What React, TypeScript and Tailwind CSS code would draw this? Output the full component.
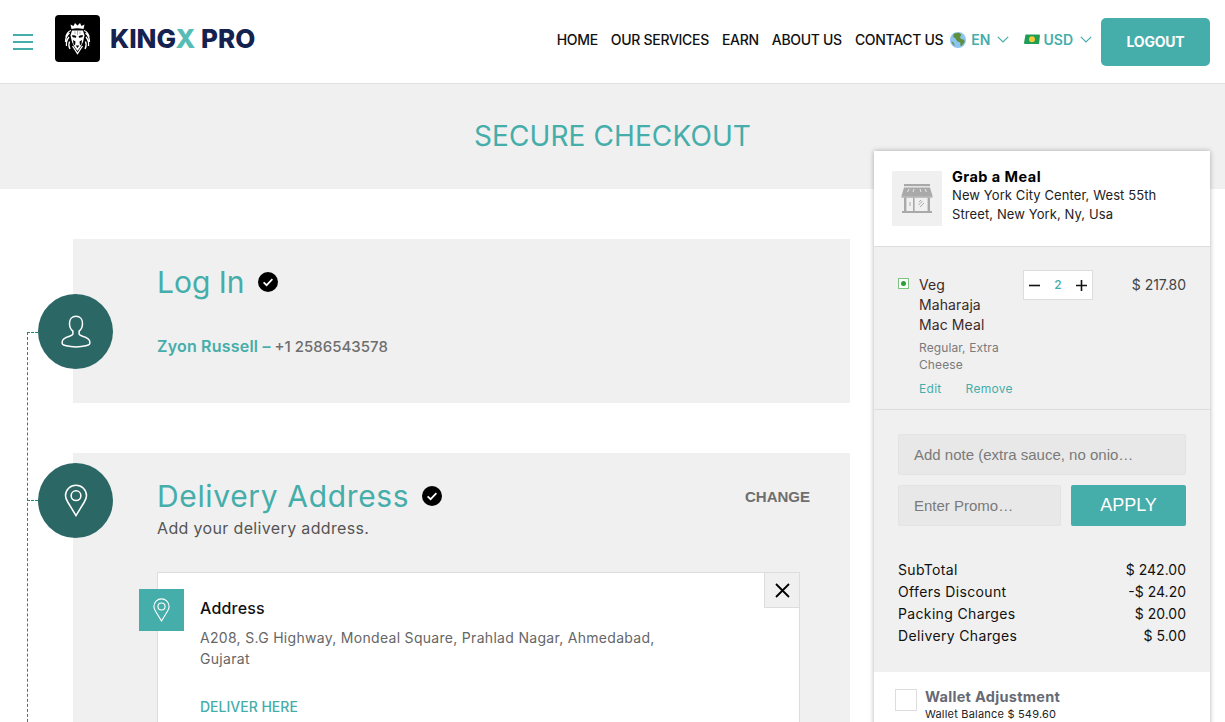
import React from "react";

const Chevron = () => (
  <svg width="12" height="7" viewBox="0 0 12 7" fill="none" stroke="#45adaa" strokeWidth="1.2"><path d="M.8.8 6 6l5.2-5.2" /></svg>
);

const Check = () => (
  <svg width="20" height="20" viewBox="0 0 20 20"><circle cx="10" cy="10" r="10" fill="#000" /><path d="M5.6 10.4 8.6 13.2 14.4 7.2" fill="none" stroke="#fff" strokeWidth="1.7" /></svg>
);

const Pin = ({ w, h }: { w: number; h: number }) => (
  <svg width={w} height={h} viewBox="0 0 24 34" fill="none" stroke="#fff" strokeWidth="1.6">
    <path d="M12 32.5 3.6 18.8C2.3 16.7 1.2 14.8 1.2 12.2 1.2 6 6 1.2 12 1.2S22.8 6 22.8 12.2c0 2.6-1.1 4.5-2.4 6.6L12 32.5Z" />
    <circle cx="12" cy="12" r="5" />
  </svg>
);

const User = () => (
  <svg width="30" height="33" viewBox="0 0 30 33" fill="none" stroke="#fff" strokeWidth="1.5">
    <path d="M15 1.2c-3.9 0-6.5 3-6.5 7 0 3.5 1.4 6.4 3.4 8v2.6c0 1-1.1 1.7-3.4 2.4-4 1.2-7.3 2.6-7.3 5.6v1.7c0 1.6 6.2 3.4 13.8 3.4s13.8-1.8 13.8-3.4v-1.7c0-3-3.3-4.4-7.3-5.6-2.3-.7-3.4-1.4-3.4-2.4v-2.6c2-1.6 3.4-4.5 3.4-8 0-4-2.6-7-6.5-7Z" />
  </svg>
);

const Lion = () => (
  <svg width="29" height="34" viewBox="0 0 29 34">
    <path fill="#fff" d="M8.500 7 7.500 2.500 10.500 4 12 1l2.500 2.500L17 1l1.500 3 3-1.500-1 4.500c-3.800-1-8.200-1-12 0Z" />
    <g fill="none" stroke="#fff" strokeWidth="1.3">
      <path d="M8 8.500C5 9.500 3.500 12 3 15M6.500 11c-2.500 2-4 5-4 9M6 15c-2 2.500-3 5.500-2.500 9M6.500 19.500C5.500 22 5.500 24.500 7 27" />
      <path d="M21 8.500c3 1 4.500 3.500 5 6.500M22.500 11c2.500 2 4 5 4 9M23 15c2 2.500 3 5.500 2.500 9M22.500 19.500c1 2.500 1 5-.5 7.500" />
      <path d="M9.500 24 14.500 31.500 19.500 24" />
    </g>
    <path fill="#fff" d="M9 8.500h11l1.500 5-1.500 6.500-2.500 5-3 4-3-4-2.500-5-1.500-6.500Z" />
    <path fill="#000" d="M8.800 13.500c1.800-.6 3.600-.1 4.600 1l-.6 1.200-3-.4ZM20.200 13.500c-1.800-.6-3.600-.1-4.600 1l.6 1.200 3-.4Z" />
    <path fill="#000" d="M10 18l2.500 1.500-.5 4-1.500-1.500ZM19 18l-2.500 1.500.5 4 1.500-1.500Z" />
    <path fill="#000" d="M12.700 23.500h3.600l-1.800 2.500Z" />
    <path stroke="#888" strokeWidth=".7" d="M14.500 9v4M12 9.500v2.500M17 9.500v2.500" />
  </svg>
);

const Store = () => (
  <svg width="32" height="32" viewBox="0 0 32 32" fill="none">
    <rect x="3" y="1" width="26" height="2.2" fill="#a9a9a9" />
    <path d="M3 4.500h26l2.500 8.500h-31Z" fill="#a9a9a9" />
    <path d="M8 6 6.500 9M13 6l-1 3M19 6l1 3M24 6l1.500 3" stroke="#e8e8e8" strokeWidth="1" />
    <path d="M.5 13h31v1.800H.5Z" fill="#b5b5b5" />
    <rect x="3" y="14.500" width="2.400" height="13.500" fill="#a9a9a9" />
    <rect x="26.600" y="14.500" width="2.400" height="13.500" fill="#a9a9a9" />
    <rect x="12" y="14.500" width="1.600" height="13.500" fill="#a9a9a9" />
    <path d="M9 19v4M17.500 22l4-4M19 24l4-4M18 19l2-2" stroke="#a9a9a9" strokeWidth="1" />
    <rect x="1" y="28" width="30" height="2" fill="#a9a9a9" />
  </svg>
);

const Globe = () => (
  <svg width="16" height="16" viewBox="0 0 16 16">
    <circle cx="8" cy="8" r="8" fill="#8cc4f2" />
    <path fill="#5f8f3c" d="M4 1.500 9 .7l2.500 2-1.500 2.300 1 2 2.600.6 1.300 2-2.800 3.900-1.500.6-.4-3.600-3-1.200-2-3L3 4.500ZM1 9l2.500 1.500L5 14l-2-1.500Z" />
  </svg>
);

const Cash = () => (
  <svg width="16" height="11" viewBox="0 0 16 11">
    <path fill="#1f9d55" d="M1.500.5h14l.5 1-1 8.500H.5L0 9Z" />
    <circle cx="8" cy="5.300" r="3" fill="#f5c93a" />
  </svg>
);

const Row = ({ l, r }: { l: string; r: string }) => (
  <div className="flex h-[22px] items-center justify-between text-[14px] text-[#111]">
    <span className="tracking-[0.35px]">{l}</span>
    <span>{r}</span>
  </div>
);

const Nav = ({ children }: { children: React.ReactNode }) => (
  <span className="text-[14px] font-medium tracking-[-0.3px] text-[#111]">{children}</span>
);

export default function App() {
  return (
    <div className="h-[722px] overflow-hidden bg-white font-['Inter',sans-serif]">
      <header className="flex h-[84px] items-center justify-between border-b border-[#e0e0e0] pl-[13px] pr-[15px]">
        <div className="flex items-center">
          <div className="flex w-[20px] flex-col gap-[5px]">
            <div className="h-[2px] bg-[#45adaa]" />
            <div className="h-[2px] bg-[#45adaa]" />
            <div className="h-[2px] bg-[#45adaa]" />
          </div>
          <div className="mb-[6px] ml-[22px] flex h-[47px] w-[45px] items-center justify-center rounded-[4px] bg-black"><Lion /></div>
          <div className="mb-[6px] ml-[10px] text-[26px] font-extrabold text-[#15214f]">KING<span className="text-[#55bdb6]">X</span> PRO</div>
        </div>
        <div className="flex items-center">
          <div className="mb-[4px] flex items-center">
            <div className="flex gap-[13px]">
              <Nav>HOME</Nav><Nav>OUR SERVICES</Nav><Nav>EARN</Nav><Nav>ABOUT US</Nav><Nav>CONTACT US</Nav>
            </div>
            <div className="ml-[7px] flex items-center gap-[5px]"><Globe /><span className="text-[14px] font-semibold text-[#45adaa]">EN</span></div>
            <div className="ml-[7px]"><Chevron /></div>
            <div className="ml-[15px] flex items-center gap-[3px]"><Cash /><span className="text-[14px] font-semibold text-[#45adaa]">USD</span></div>
            <div className="ml-[7px]"><Chevron /></div>
          </div>
          <button className="ml-[9px] h-[48px] w-[109px] rounded-[5px] bg-[#45adaa] text-[14px] font-bold tracking-[-0.2px] text-white">LOGOUT</button>
        </div>
      </header>

      <div className="flex h-[105px] items-start justify-center bg-[#f0f0f0] pt-[33px]">
        <h1 className="text-[28px] leading-[38px] font-normal tracking-[0.1px] text-[#45adaa]">SECURE CHECKOUT</h1>
      </div>

      <div className="flex items-start">
        <div className="relative ml-[73px] mt-[50px] flex w-[777px] flex-col gap-[50px]">
          <div className="absolute left-[-46px] top-[93px] h-[400px] w-[11px] border-l border-t border-dashed border-[#1f8a70]" />
          <div className="absolute left-[-46px] top-[261px] w-[11px] border-t border-dashed border-[#1f8a70]" />

          <section className="relative h-[164px] bg-[#f0f0f0] pl-[84px] pt-[22px]">
            <div className="absolute left-[-35px] top-[55px] flex h-[75px] w-[75px] items-center justify-center rounded-full bg-[#2b6765]"><User /></div>
            <div className="flex items-center gap-[13px]">
              <h2 className="text-[30px] leading-[42px] font-normal text-[#45adaa]">Log In</h2>
              <Check />
            </div>
            <p className="mt-[31px] text-[15px] leading-[24px] font-medium text-[#6e6e6e]">
              <span className="text-[16px] font-semibold tracking-[0.2px] text-[#45adaa]">Zyon Russell –</span> +1 2586543578
            </p>
          </section>

          <section className="relative h-[300px] bg-[#f0f0f0] pl-[84px] pt-[22px]">
            <div className="absolute left-[-35px] top-[10px] flex h-[75px] w-[75px] items-center justify-center rounded-full bg-[#2b6765]"><Pin w={24} h={33} /></div>
            <div className="flex items-center">
              <h2 className="text-[30px] leading-[42px] font-normal tracking-[0.65px] text-[#45adaa]">Delivery Address</h2>
              <div className="ml-[13px]"><Check /></div>
              <span className="ml-auto mr-[40px] mt-[2px] font-['Liberation_Sans',sans-serif] text-[15px] font-bold text-[#6e6e6e]">CHANGE</span>
            </div>
            <p className="text-[16px] leading-[22px] tracking-[0.35px] text-[#555]">Add your delivery address.</p>
            <div className="relative mt-[33px] h-[200px] w-[643px] border border-[#dddddd] bg-white pl-[42px] pt-[24px]">
              <div className="absolute left-[-19px] top-[16px] flex h-[42px] w-[45px] items-center justify-center bg-[#45adaa]"><Pin w={17} h={24} /></div>
              <div className="absolute right-0 top-0 flex h-[35px] w-[35px] items-center justify-center border-b border-l border-[#dddddd] bg-[#f0f0f0]">
                <svg width="15" height="15" viewBox="0 0 15 15" stroke="#000" strokeWidth="1.8"><path d="M1 1l13 13M14 1 1 14" /></svg>
              </div>
              <h3 className="text-[16px] leading-[22px] font-medium tracking-[0.2px] text-[#111]">Address</h3>
              <p className="mt-[8px] w-[480px] text-[14px] leading-[21px] tracking-[0.3px] text-[#666]">A208, S.G Highway, Mondeal Square, Prahlad Nagar, Ahmedabad, Gujarat</p>
              <div className="mt-[27px] text-[14px] leading-[21px] font-medium text-[#45adaa]">DELIVER HERE</div>
            </div>
          </section>
        </div>

        <aside className="ml-[24px] mt-[-38px] h-[600px] w-[336px] bg-white shadow-[0_0_5px_rgba(0,0,0,0.3)]">
          <div className="flex h-[96px] gap-[10px] border-b border-[#dddddd] bg-white pl-[18px] pr-[20px] pt-[20px]">
            <div className="flex h-[55px] w-[50px] shrink-0 items-center justify-center bg-[#f0f0f0]"><Store /></div>
            <div className="-mt-[2px]">
              <div className="text-[14.5px] leading-[16px] font-bold tracking-[0.45px] text-black">Grab a Meal</div>
              <div className="mt-[1px] text-[13px] leading-[19px] tracking-[0.1px] text-[#222]">New York City Center, West 55th Street, New York, Ny, Usa</div>
            </div>
          </div>
          <div className="bg-[#f0f0f0] px-[24px]">
            <div className="-mx-[24px] flex h-[163px] items-start border-b border-[#dddddd] pl-[24px] pr-[24px] pt-[23px]">
              <div className="mt-[8px] flex h-[11px] w-[11px] shrink-0 items-center justify-center border border-[#7cc47f] bg-white">
                <div className="h-[5px] w-[5px] rounded-full bg-[#2e9e3a]" />
              </div>
              <div className="ml-[10px] w-[104px] shrink-0 pt-[5px]">
                <div className="w-[80px] text-[14px] leading-[20px] tracking-[0.1px] text-[#3a2a2a]">Veg Maharaja Mac Meal</div>
                <div className="mt-[4px] text-[12px] leading-[17px] tracking-[0.1px] text-[#7a7a7a]">Regular, Extra Cheese</div>
                <div className="mt-[7px] flex gap-[24px] text-[12px] leading-[17px] tracking-[0.3px] text-[#45adaa]"><span>Edit</span><span>Remove</span></div>
              </div>
              <div className="flex h-[30px] w-[70px] items-center justify-between border border-[#dddddd] bg-white px-[5px]">
                <svg width="11" height="11" viewBox="0 0 11 11" stroke="#111" strokeWidth="1.6"><path d="M0 5.500h11" /></svg>
                <span className="text-[12px] font-medium text-[#45adaa]">2</span>
                <svg width="11" height="11" viewBox="0 0 11 11" stroke="#111" strokeWidth="1.6"><path d="M0 5.500h11M5.500 0v11" /></svg>
              </div>
              <div className="ml-auto mt-[5px] text-[14px] leading-[20px] tracking-[-0.05px] text-[#444]">$ 217.80</div>
            </div>
            <div className="pt-[24px] font-['Liberation_Sans',sans-serif]">
              <div className="flex h-[41px] items-center rounded-[2px] border border-[#e3e3e3] bg-[#e8e8e8] px-[15px] pt-[1px] text-[15px] text-[#7a7a7a]">Add note (extra sauce, no onio…</div>
              <div className="mt-[10px] flex gap-[10px]">
                <div className="flex h-[41px] w-[163px] items-center rounded-[2px] border border-[#e3e3e3] bg-[#e8e8e8] px-[15px] pt-[1px] text-[15px] text-[#7a7a7a]">Enter Promo…</div>
                <button className="h-[41px] w-[115px] rounded-[2px] bg-[#45adaa] text-[18px] text-white">APPLY</button>
              </div>
            </div>
            <div className="pb-[26px] pt-[32px]">
              <Row l="SubTotal" r="$ 242.00" />
              <Row l="Offers Discount" r="-$ 24.20" />
              <Row l="Packing Charges" r="$ 20.00" />
              <Row l="Delivery Charges" r="$ 5.00" />
            </div>
          </div>
          <div className="flex gap-[8px] bg-white pl-[21px] pt-[17px]">
            <div className="h-[22px] w-[22px] shrink-0 border border-[#dddddd] bg-white" />
            <div>
              <div className="text-[14.5px] leading-[16px] font-bold tracking-[0.3px] text-[#666a75]">Wallet Adjustment</div>
              <div className="mt-[2px] text-[11px] leading-[14px] tracking-[0.2px] text-[#222]">Wallet Balance $ 549.60</div>
            </div>
          </div>
        </aside>
      </div>
    </div>
  );
}
